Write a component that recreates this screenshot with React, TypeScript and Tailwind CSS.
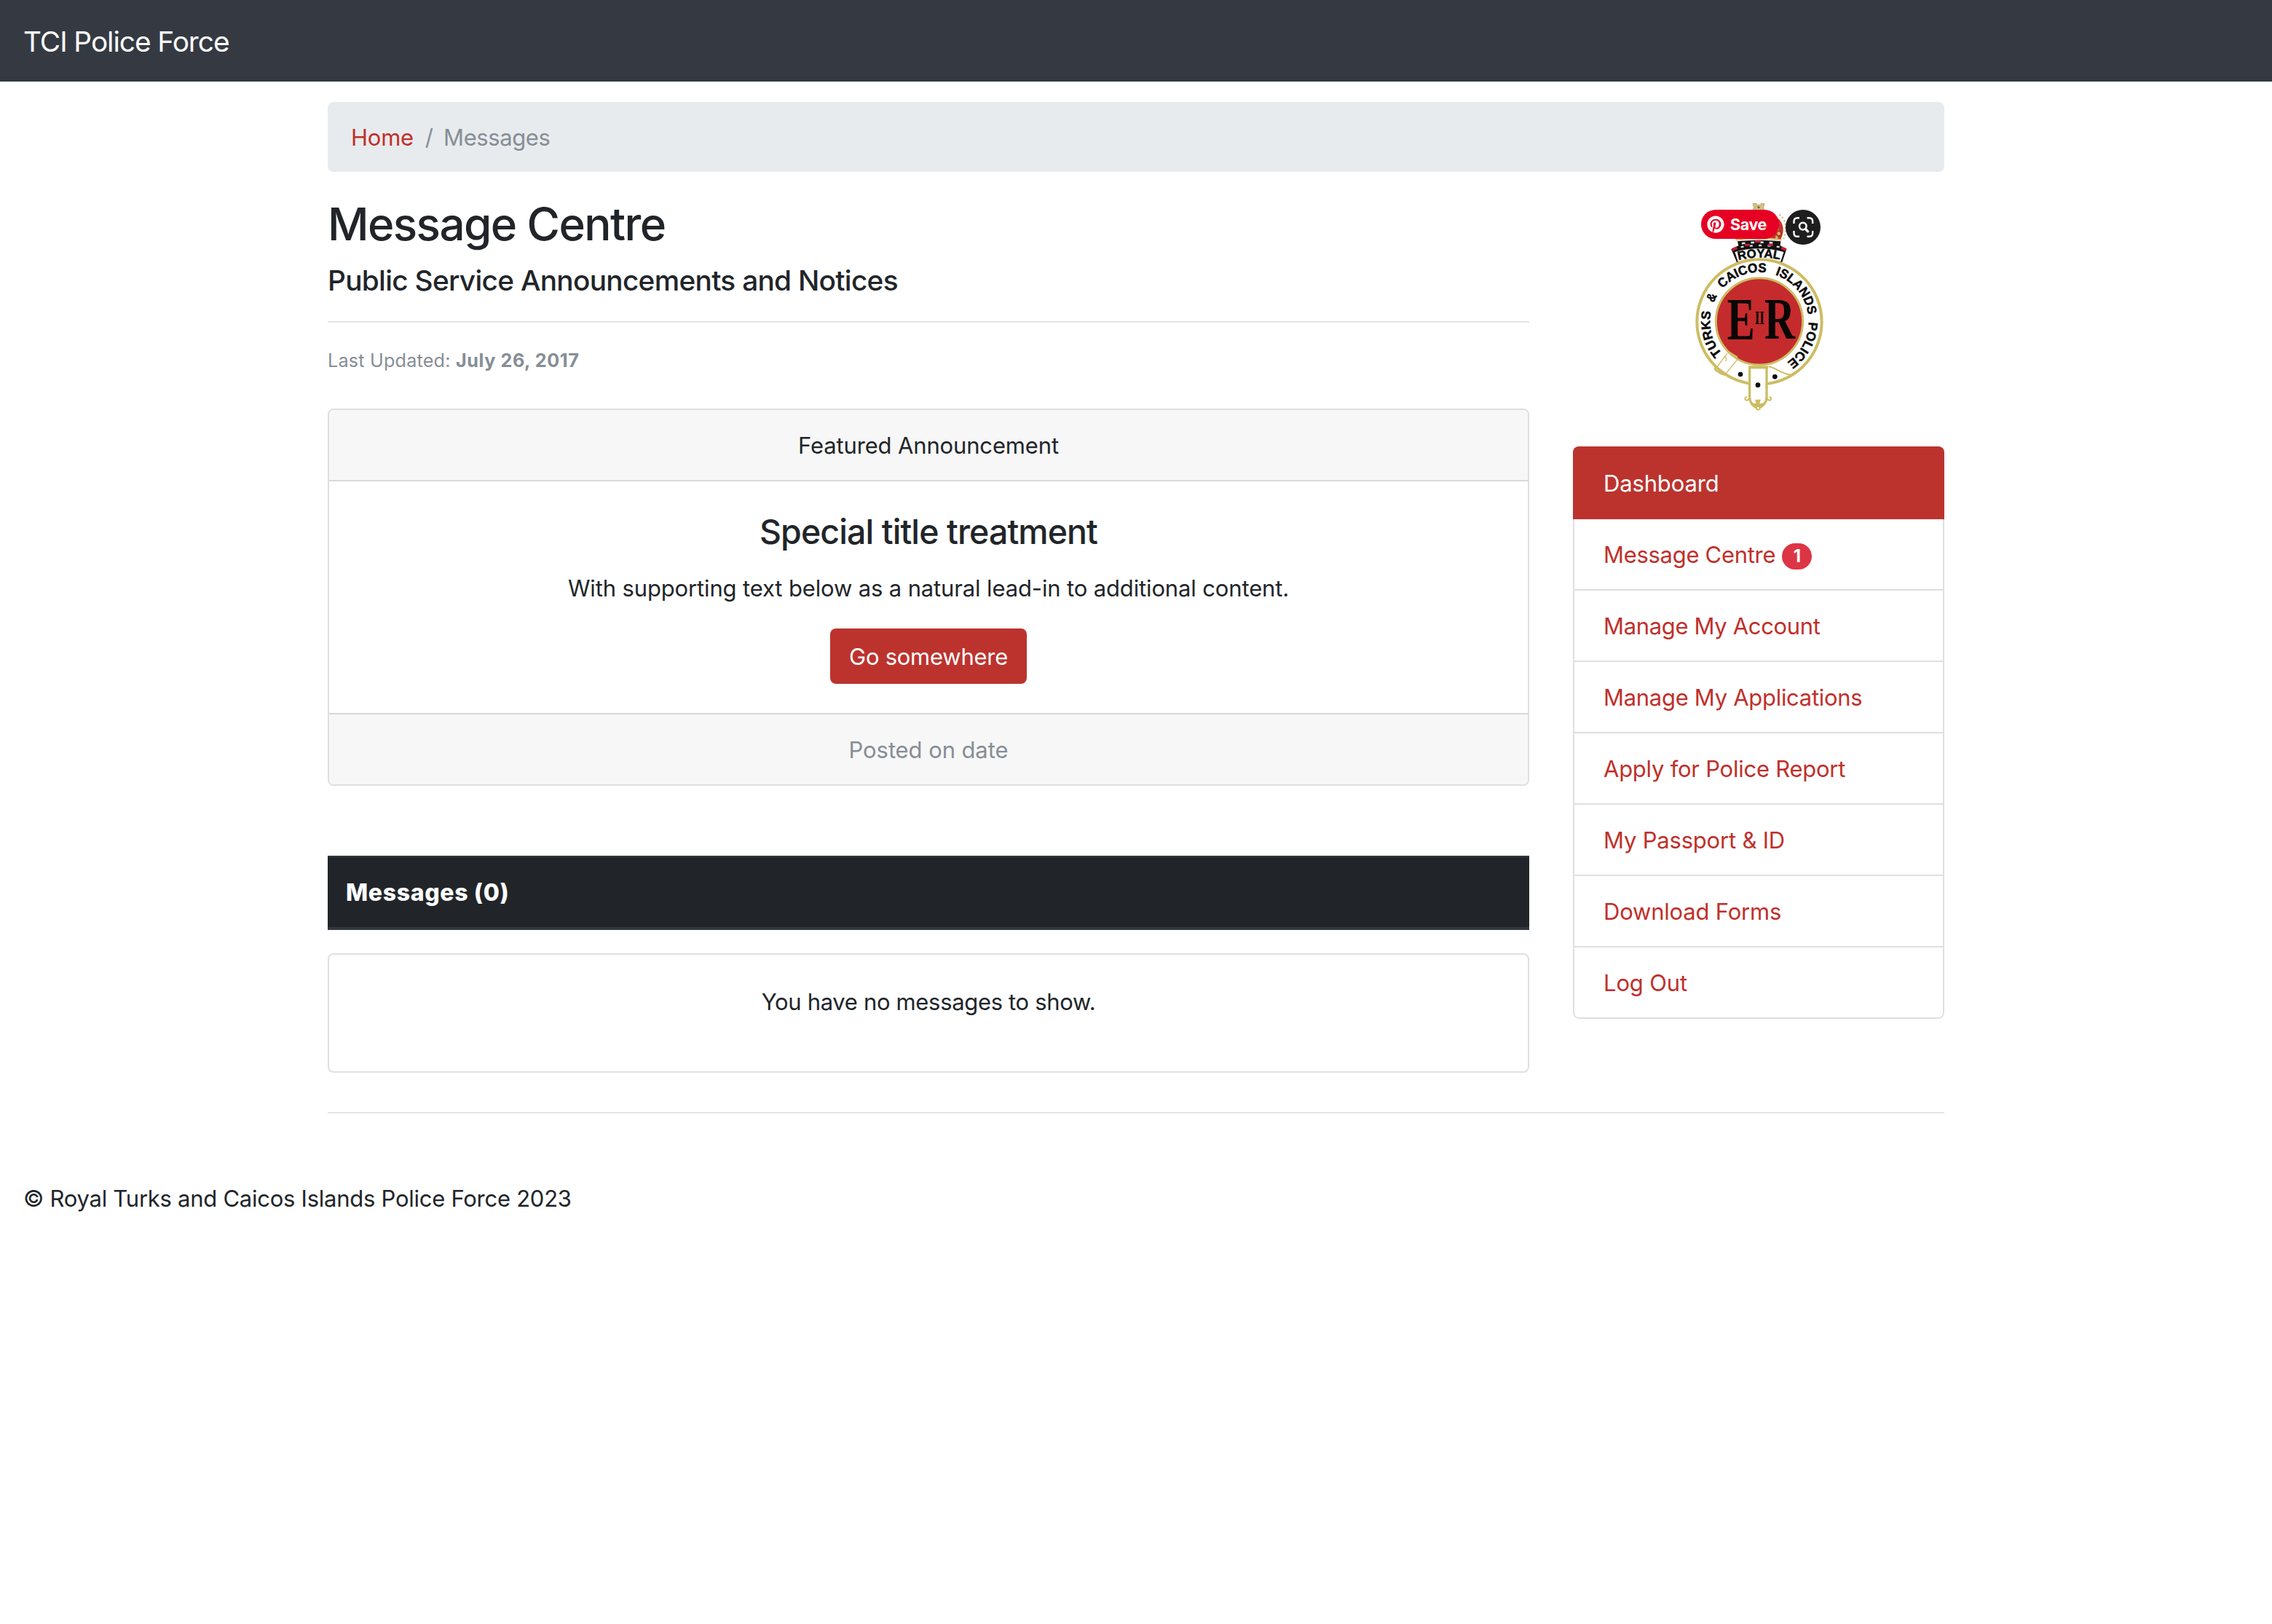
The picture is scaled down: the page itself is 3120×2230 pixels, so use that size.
import type { ReactNode } from "react";
import { FaPinterest } from "react-icons/fa";

const menu: { label: string; tracking: string; badge?: string; active?: boolean }[] = [
  { label: "Dashboard", tracking: "tracking-[-0.15px]", active: true },
  { label: "Message Centre", tracking: "tracking-[-0.3px]", badge: "1" },
  { label: "Manage My Account", tracking: "tracking-[-0.35px]" },
  { label: "Manage My Applications", tracking: "tracking-[-0.3px]" },
  { label: "Apply for Police Report", tracking: "tracking-[-0.25px]" },
  { label: "My Passport & ID", tracking: "tracking-[-0.2px]" },
  { label: "Download Forms", tracking: "tracking-[-0.2px]" },
  { label: "Log Out", tracking: "tracking-[-0.15px]" },
];

function Card({ children, className = "" }: { children: ReactNode; className?: string }) {
  return (
    <div className={"overflow-hidden rounded-lg border-2 border-[#dfdfdf] bg-white text-center " + className}>
      {children}
    </div>
  );
}

/** Force crest: crown, garter ring with lettering, royal cypher and buckle strap. */
function Crest() {
  const gold = "#cdbd63";
  return (
    <svg viewBox="-15 30 720 900" className="h-[300px] w-[240px]" aria-label="Royal Turks and Caicos Islands Police crest">
      <defs>
        <path id="ring" d="M348 747 A203 203 0 0 1 348 341 A203 203 0 0 1 348 747" />
        <path id="scroll" d="M262 292 Q348 270 436 290" />
      </defs>

      {/* crown */}
      <path d="M322 58 h14 l4 6 h12 l4 -6 h12 v8 l-4 8 l4 8 h-14 l6 22 h-32 l6 -22 h-12 l4 -8 l-4 -8z" fill="#cfc08a" stroke="#a8985a" strokeWidth="2" />
      <circle cx="345" cy="74" r="5" fill="#8a6a2a" />
      <path d="M262 205 C225 150 262 105 345 100 C430 92 466 150 436 206z" fill="#c8322f" />
      <path d="M345 100 C410 100 434 150 418 206" fill="none" stroke="#d9b870" strokeWidth="10" />
      <path d="M430 104 C460 126 464 160 448 204" fill="none" stroke="#d8ca90" strokeWidth="8" strokeDasharray="7 8" />
      <circle cx="428" cy="182" r="10" fill="#e0b860" stroke="#a43a22" strokeWidth="6" />
      <circle cx="272" cy="200" r="10" fill="#c8402f" />
      <path d="M250 208 Q345 196 440 208" fill="none" stroke="#d8c070" strokeWidth="7" />

      {/* ermine band and scroll */}
      <path d="M258 214 Q346 204 436 214 L434 232 L460 246 L442 300 L255 300 L232 246 L262 232z" fill="#111" />
      <path d="M276 223 Q346 213 428 223" fill="none" stroke="#ddd" strokeWidth="8" strokeDasharray="14 24" />
      <path d="M272 238 Q346 224 434 238" fill="none" stroke="#ddd" strokeWidth="7" strokeDasharray="12 25" />
      <path d="M330 215 h24" stroke="#c0203a" strokeWidth="9" />
      <path d="M288 229 h20 M384 229 h20" stroke="#c0203a" strokeWidth="9" />
      <path d="M236 249 l20 -9 M438 240 l20 9" stroke="#c0203a" strokeWidth="11" />
      <path d="M244 256 Q346 226 452 256 L438 300 H258z" fill="#fff" stroke="#111" strokeWidth="5" />
      <text fontFamily="Liberation Sans" fontWeight="700" fontSize="50" fill="#0a0a0a" stroke="#0a0a0a" strokeWidth="1.5">
        <textPath href="#scroll" textLength="172" lengthAdjust="spacingAndGlyphs">ROYAL</textPath>
      </text>

      {/* garter ring */}
      <circle cx="348" cy="546" r="257" fill="#fff" stroke={gold} strokeWidth="12" />
      <circle cx="348" cy="544" r="179" fill="#c52b2d" stroke={gold} strokeWidth="9" />
      <g fontFamily="Liberation Sans" fontWeight="700" fontSize="53" fill="#0a0a0a" stroke="#0a0a0a" strokeWidth="1.5">
        <text><textPath href="#ring" startOffset="174" textLength="186" lengthAdjust="spacingAndGlyphs">TURKS</textPath></text>
        <text><textPath href="#ring" startOffset="396" textLength="34" lengthAdjust="spacingAndGlyphs">&amp;</textPath></text>
        <text><textPath href="#ring" startOffset="466" textLength="200" lengthAdjust="spacingAndGlyphs">CAICOS</textPath></text>
        <text><textPath href="#ring" startOffset="704" textLength="225" lengthAdjust="spacingAndGlyphs">ISLANDS</textPath></text>
        <text><textPath href="#ring" startOffset="958" textLength="196" lengthAdjust="spacingAndGlyphs">POLICE</textPath></text>
      </g>

      {/* royal cypher */}
      <g fontFamily="Liberation Serif" fontWeight="700" fill="#0a0606">
        <text x="215" y="617" fontSize="246" textLength="114" lengthAdjust="spacingAndGlyphs">E</text>
        <text x="329" y="555" fontSize="76" textLength="40" lengthAdjust="spacingAndGlyphs">II</text>
        <text x="369" y="614" fontSize="240" textLength="126" lengthAdjust="spacingAndGlyphs">R</text>
      </g>

      {/* strap details */}
      <g fill="none" stroke={gold} strokeWidth="4">
        <path d="M216 676 L168 738 M258 700 L206 764" />
        <path d="M204 690 q14 4 4 18" />
        <path d="M222 670 l36 22" strokeWidth="7" />
        <path d="M164 734 q2 14 16 18 q14 14 32 10" strokeWidth="8" />
        <path d="M386 730 C420 735 440 765 486 764" strokeWidth="6" />
      </g>
      <path d="M308 728 V862 Q312 892 342 906 Q374 892 378 862 V728z" fill="#fff" />
      <path d="M308 730 V860 Q312 892 342 902 Q374 892 378 860 V730" fill="none" stroke={gold} strokeWidth="10" />
      <path d="M303 733 H384" stroke={gold} strokeWidth="12" />
      <path d="M306 862 q-10 14 -17 2 q0 -9 9 -8 M380 862 q10 14 17 2 q0 -9 -9 -8" fill="none" stroke={gold} strokeWidth="6" />
      <path d="M330 866 h24 l-5 15 q14 4 18 -6 q2 18 -14 24 h-22 q-16 -6 -14 -24 q6 10 18 6z" fill={gold} />
      <circle cx="343" cy="901" r="7" fill="#fff" stroke={gold} strokeWidth="6" />
      <circle cx="270" cy="762" r="10" fill="#0a0a0a" />
      <circle cx="342" cy="806" r="10" fill="#0a0a0a" />
      <circle cx="412" cy="772" r="10" fill="#0a0a0a" />
    </svg>
  );
}

export default function App() {
  return (
    <div className="min-h-[2230px] bg-white font-['Inter',sans-serif] text-[31px] leading-[48px] text-[#212529]">
      <nav className="flex h-28 items-center bg-[#353a42] px-8 pt-0.5">
        <a className="text-[38.8px] leading-[60px] tracking-[-1.05px] text-white">TCI Police Force</a>
      </nav>

      <div className="mx-auto mt-7 w-[2220px]">
        <div className="flex h-24 items-center rounded-lg bg-[#e8ebee] px-8 pt-0.5 text-[#868e96]">
          <a className="tracking-[-0.25px] text-[#c0302b]">Home</a>
          <span className="pr-[14px] pl-4">/</span>
          <span className="tracking-[-0.4px]">Messages</span>
        </div>

        <div className="mt-8 flex justify-between">
          <main className="w-[1650px]">
            <h1 className="pt-0.5 text-[62px] leading-[76px] font-medium tracking-[-1.6px]">Message Centre</h1>
            <h2 className="mt-[15px] text-[38.8px] leading-[48px] font-medium tracking-[-0.71px]">
              Public Service Announcements and Notices
            </h2>
            <hr className="mt-8 border-t-2 border-[#e5e5e5]" />
            <p className="mt-7 text-[25.2px] tracking-[0.2px] text-[#868e96]">
              Last Updated: <b className="font-bold tracking-[0.57px]">July 26, 2017</b>
            </p>

            <Card className="mt-[42px]">
              <div className="border-b-2 border-[#d8d8d8] bg-[#f7f7f7] pt-[25px] pb-[23px] tracking-[-0.15px]">Featured Announcement</div>
              <div className="px-10 pt-[41px] pb-10">
                <h4 className="text-[46.5px] leading-[57px] font-medium tracking-[-0.93px]">Special title treatment</h4>
                <p className="mt-[25px] tracking-[-0.14px]">
                  With supporting text below as a natural lead-in to additional content.
                </p>
                <a className="mx-auto mt-[31px] block h-[76px] w-[270px] rounded-lg bg-[#bc332e] pt-px leading-[76px] tracking-[-0.26px] text-white">
                  Go somewhere
                </a>
              </div>
              <div className="border-t-2 border-[#d8d8d8] bg-[#f7f7f7] pt-[25px] pb-[23px] tracking-[-0.09px] text-[#868e96]">Posted on date</div>
            </Card>

            <div className="mt-24 border-t-2 border-b-4 border-[#32383e] bg-[#212529] px-[25px] pt-[25px] pb-[23px] text-[32px] font-extrabold tracking-[0.65px] text-white">
              Messages (0)
            </div>

            <Card className="mt-8 h-[164px] pt-[41px]">
              <p className="tracking-[-0.33px]">You have no messages to show.</p>
            </Card>
          </main>

          <aside className="w-[510px]">
            <div className="relative mx-auto mt-0.5 h-[300px] w-[240px]">
              <Crest />
              <div className="absolute top-[18px] left-[41px] flex h-10 w-[107px] items-center rounded-full bg-[#e60023] text-white">
                <FaPinterest className="ml-2 size-6" />
                <span className="ml-2 text-[21.5px] leading-10 font-bold tracking-[-0.4px]">Save</span>
              </div>
              <div className="absolute top-[18px] left-[157px] size-12 rounded-full bg-[#1e1e1e]">
                <svg viewBox="0 0 48 48" className="size-12" fill="none" stroke="#fff" strokeWidth="2.4">
                  <path d="M11.5 19 V16 Q11.5 11.2 16.3 11.2 H19 M29.5 11.2 H32.5 Q37.2 11.2 37.2 16 V19 M37.2 29 V32 Q37.2 36.8 32.5 36.8 H29.5 M19 36.8 H16.3 Q11.5 36.8 11.5 32 V29" />
                  <circle cx="23.8" cy="22.6" r="4.8" strokeWidth="2.5" />
                  <path d="M27.6 26.6 L30.6 29.8" strokeWidth="3.4" strokeLinecap="round" />
                </svg>
              </div>
            </div>

            <ul className="mt-[43px] overflow-hidden rounded-lg">
              {menu.map((item) => (
                <li
                  key={item.label}
                  className={
                    item.active
                      ? "h-[100px] bg-[#bc332e] px-[42px] pt-[27px] text-white"
                      : "h-[98px] border-x-2 border-b-2 border-[#dfdfdf] px-10 pt-[25px] text-[#c0302b] last:rounded-b-lg"
                  }
                >
                  <a className={"flex items-center " + item.tracking}>
                    {item.label}
                    {item.badge && (
                      <span className="mt-1 ml-[9px] flex h-9 w-[41px] items-center justify-center rounded-full bg-[#dc3545] text-[24px] leading-none font-bold text-white">
                        {item.badge}
                      </span>
                    )}
                  </a>
                </li>
              ))}
            </ul>
          </aside>
        </div>

        <hr className="mt-[54px] border-t-2 border-[#e5e5e5]" />
      </div>

      <footer className="mt-[93px] px-8 tracking-[-0.26px]">© Royal Turks and Caicos Islands Police Force 2023</footer>
    </div>
  );
}
